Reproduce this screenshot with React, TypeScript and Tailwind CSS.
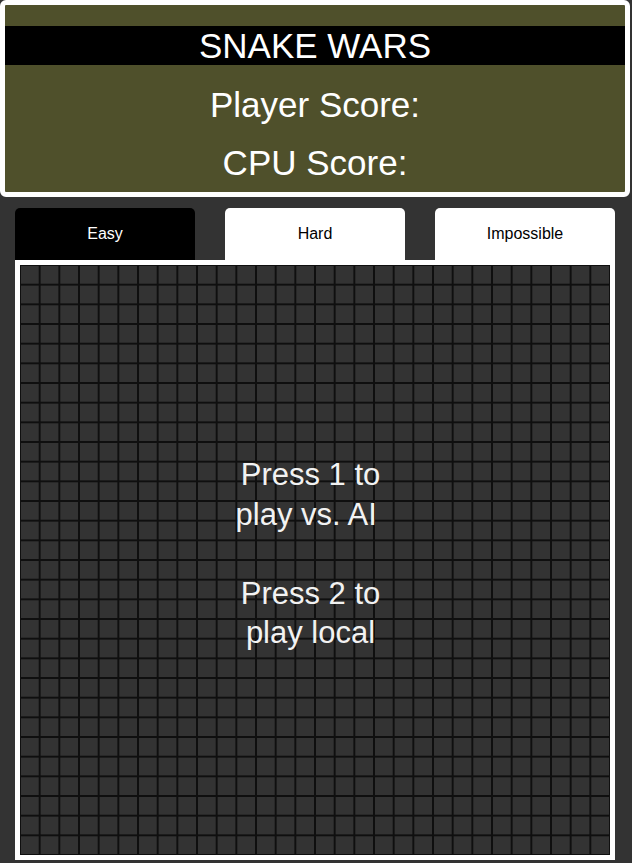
import React from "react";

const CELLS = 30;

function Board() {
  return (
    <div className="relative border-[5px] border-white bg-[#111]">
      <svg width="590" height="590" viewBox="0 0 600 600" className="block">
        <defs>
          <pattern id="cell" width="20" height="20" patternUnits="userSpaceOnUse">
            <rect width="20" height="20" fill="#0f0f0f" />
            <rect x="1" y="1" width="18" height="18" fill="#333" />
          </pattern>
        </defs>
        <rect width={CELLS * 20} height={CELLS * 20} fill="url(#cell)" />
      </svg>
      <div className="absolute inset-0 flex items-center justify-center pr-[9px] pb-[12px]">
        <div className="text-center text-[31px] leading-[39.5px] text-[#f2f2f2] whitespace-pre">
          <div>Press 1 to</div>
          <div>{"play vs. AI "}</div>
          <div>&nbsp;</div>
          <div>Press 2 to</div>
          <div>play local</div>
        </div>
      </div>
    </div>
  );
}

export default function App() {
  const tabs = [
    { name: "Easy", active: true },
    { name: "Hard", active: false },
    { name: "Impossible", active: false },
  ];

  return (
    <div
      className="min-h-[863px] w-[632px] bg-[#333333]"
      style={{ fontFamily: '"Liberation Sans", Arial, sans-serif' }}
    >
      <header className="w-[630px] rounded-[6px] border-[5px] border-white bg-[#4f502b] pb-[9px] pt-[21px] text-center text-white">
        <h1 className="bg-black text-[35px] leading-[39px]">SNAKE WARS</h1>
        <p className="mt-[20px] text-[35px] leading-[40px]">Player Score:</p>
        <p className="mt-[18px] text-[35px] leading-[40px]">CPU Score:</p>
      </header>

      <div className="mx-[15px] mt-[11px] w-[600px]">
        <div className="flex justify-between">
          {tabs.map((tab) => (
            <button
              key={tab.name}
              className={
                tab.active
                  ? "h-[52px] w-[180px] rounded-t-[5px] bg-black text-[16px] text-white"
                  : "h-[52px] w-[180px] rounded-t-[5px] bg-white text-[16px] text-black"
              }
            >
              {tab.name}
            </button>
          ))}
        </div>
        <Board />
      </div>
    </div>
  );
}
